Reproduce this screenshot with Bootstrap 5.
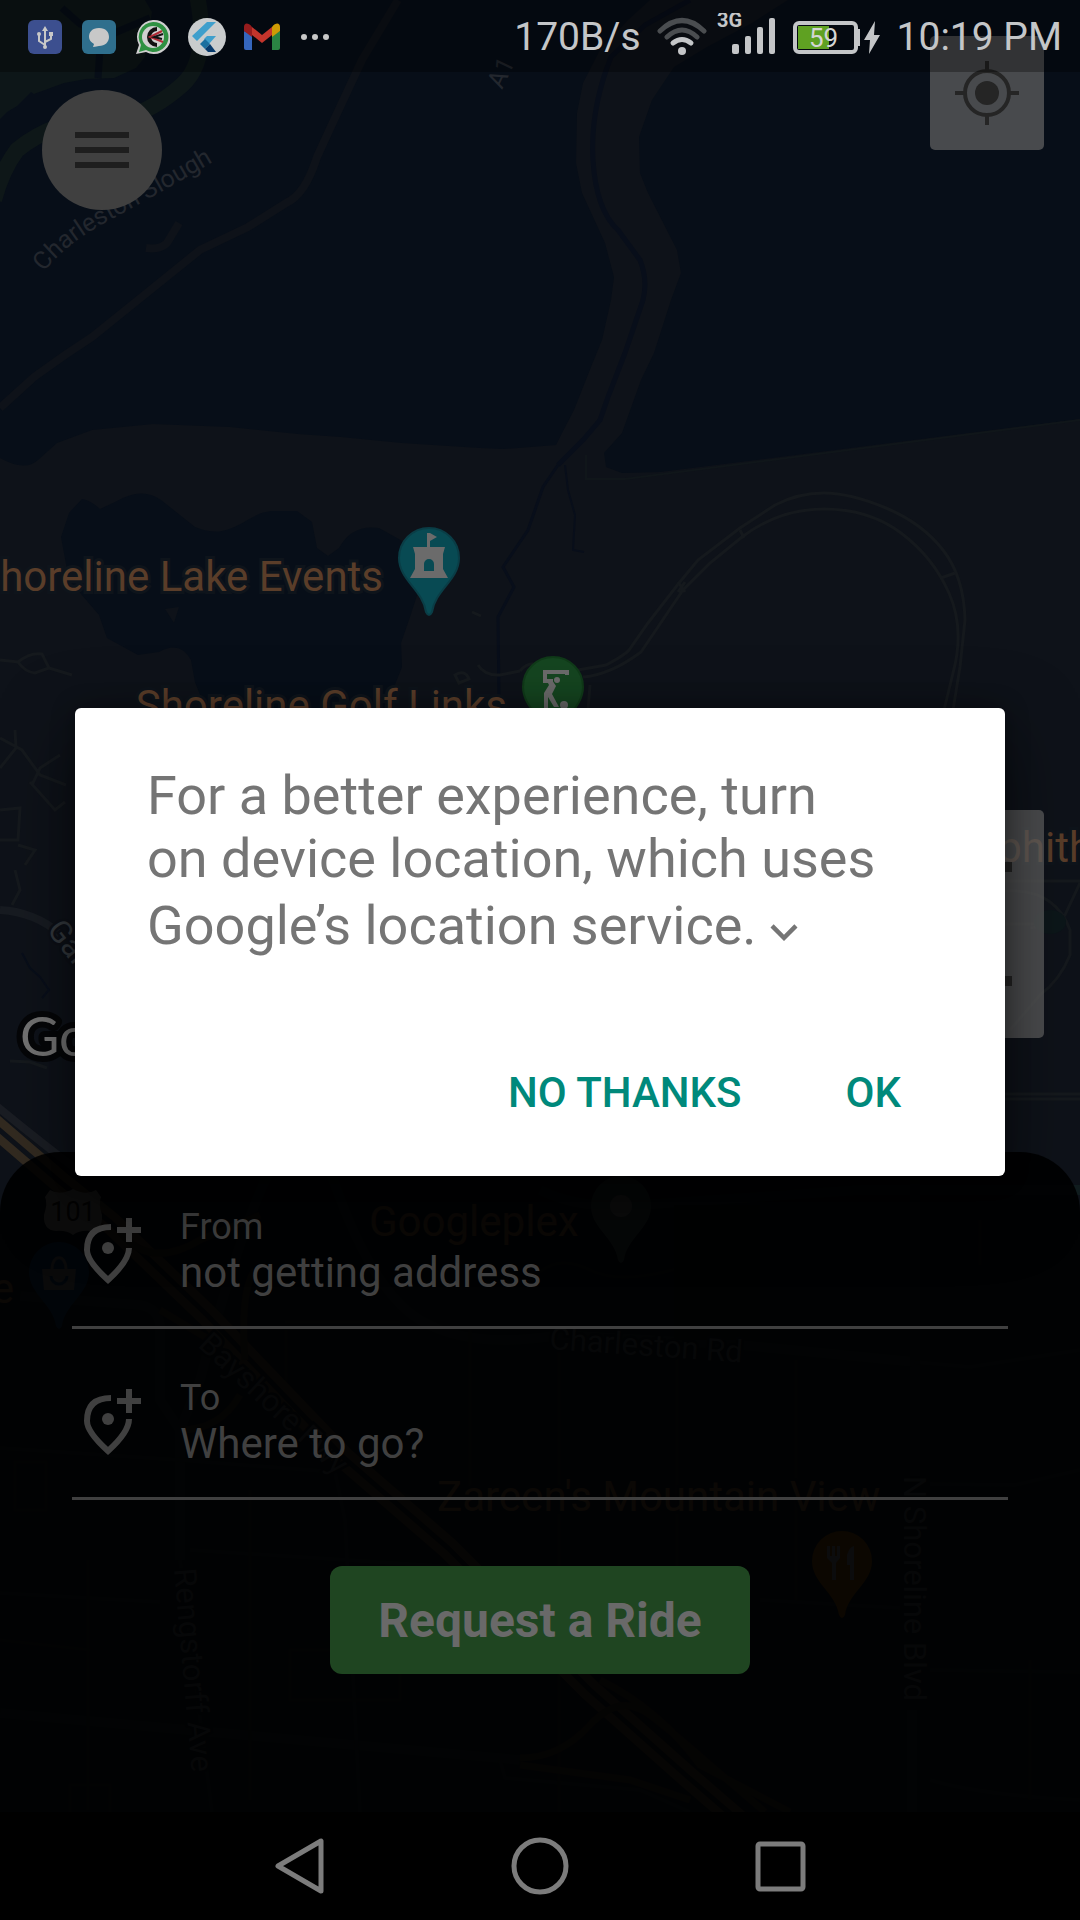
<!DOCTYPE html>
<html lang="en">
<head>
<meta charset="utf-8">
<meta name="viewport" content="width=device-width, initial-scale=1">
<title>Request a Ride</title>
<link rel="stylesheet" href="https://cdn.jsdelivr.net/npm/bootstrap@5.3.0/dist/css/bootstrap.min.css">
<style>
  body { font-family: Roboto, "Noto Sans", sans-serif; background: #000; color: #404040; }
  .phone { background: #0e1219; }
  .map-canvas { position: absolute; inset: 0; width: 100%; height: 100%; }
  .status-strip { height: 72px; background: rgba(0,0,0,.3); color: #c4c6c8; font-size: 39px; line-height: 48px; padding: 2px 18px 0 28px; z-index: 3; }
  .notif { gap: 18px; }
  .plain-btn { background: none; border: 0; padding: 0; color: inherit; }
  .plain-btn svg, .notif svg, .indicators svg, .sheet svg { display: block; }
  .menu-btn { left: 42px; top: 18px; width: 120px; height: 120px; border-radius: 50%; background: #404040; color: #1e1e1e; }
  .map-btn { width: 114px; height: 114px; background: rgba(100,100,100,.7); color: #252525; border-radius: 5px; }
  .locate-btn { right: 36px; top: -36px; }
  .zoom-box { right: 36px; bottom: 114px; }
  .zoom-box .map-btn:first-child { border-radius: 5px 5px 0 0; }
  .zoom-box .map-btn:last-child { border-radius: 0 0 5px 5px; }
  .sheet { background: rgba(0,0,0,.87); border-radius: 60px 60px 0 0; padding: 6px 72px 138px; }
  .place { border-bottom: 3px solid #404040; padding: 48px 0 29px 12px; gap: 36px; }
  .place label { font-size: 36px; line-height: 42px; }
  .place input { background: none; border: 0; outline: 0; padding: 0; color: #404040; font-size: 42px; line-height: 49px; height: 49px; width: 100%; }
  .place input::placeholder { color: #404040; opacity: 1; }
  .ride-btn { margin-top: 66px; width: 420px; height: 108px; border: 0; border-radius: 12px; background: #1f4521; color: #696969; font-size: 48px; font-weight: 700; line-height: 56px; padding: 2px 0 0; }
  .system-nav { background: #000; height: 108px; color: #7c7c7c; gap: 180px; z-index: 3; }
  .prompt-layer { inset: 0; z-index: 2; padding: 0 75px; }
  .prompt { background: #fff; border: 0; border-radius: 6px; box-shadow: 0 24px 72px rgba(0,0,0,.5), 0 0 24px rgba(0,0,0,.3); padding: 56px 80px 35px 72px; }
  .prompt-text { color: #757575; font-size: 54px; line-height: 63px; margin: 0 0 85px; }
  .prompt-text svg { vertical-align: -15px; padding-top: 15px; box-sizing: content-box; display: inline; }
  .prompt-actions { gap: 56px; }
  .prompt-actions button { color: #00897b; font-size: 42px; line-height: 49px; font-weight: 500; padding: 24px; }
  .poi { fill: #5a3d29; font-size: 42px; stroke: #0e141b; stroke-width: 6px; paint-order: stroke; }
  .street { fill: #23272e; font-size: 25px; }
  .avenue { fill: #33383d; font-size: 31px; stroke: #0d1017; stroke-width: 5px; paint-order: stroke; }
</style>
</head>
<body>
<div class="phone position-relative min-vh-100 d-flex flex-column overflow-hidden">

<svg class="map-canvas" viewBox="0 0 1080 1920" preserveAspectRatio="xMidYMin slice" aria-label="Map of Shoreline, Mountain View" role="img">
  <defs>
    <path id="pinShape" d="M0-30A30 30 0 0 1 30 0C30 22 6 32 3 54Q0 60-3 54C-6 32-30 22-30 0A30 30 0 0 1 0-30Z"/>
    <path id="sloughLine" d="M44 272Q65 244 110 220T220 158"/>
  </defs>
  <!-- bay water -->
  <g fill="#070e18">
    <path d="M0 0H650L628 20 600 50 583 83 577 113 576 163 582 193 605 243 614 277 611 300 602 340 591 367 574 410 562 433 556 445 518 448 503 449 480 448 402 443 341 437 298 434 230 427 153 424 92 430 57 443 38 460Q25 472 0 458Z"/>
    <path d="M788 0 752 23 707 47 674 67 652 100 639 137 640 173 648 193 677 250 681 273 671 300 654 353 641 380 622 433 604 453 606 467 622 473 660 472 1080 419V0Z"/>
    <path d="M82 499Q90 500 100 509L115 502Q142 486 161 500L195 527Q210 533 222 531C245 526 255 510 276 511H297L312 522 317 548 328 556 339 548Q352 524 379 528L413 547 421 583 410 617 401 643 402 667 396 682 380 720H210L195 682 191 660Q180 640 159 652L138 655 107 638 99 615 69 580 61 537 69 513Z"/>
  </g>
  <path d="M165 609l14-2-5 16z" fill="#0e1219"/>
  <g fill="none" stroke="#0e1219" stroke-width="8">
    <path d="M398 0 362 60 334 120 317 157Q305 195 286 203L248 227 200 250 138 300 92 337 65 355 34 377 0 408"/>
    <path d="M146 248Q160 250 167 243L179 223"/>
  </g>
  <!-- marsh -->
  <path d="M0 0H145L152 12 145 57 136 68 114 78 86 79 64 83 34 94 31 92 17 106 7 112 0 119Z" fill="#0d1618"/>
  <path d="M62 8 80 24 112 34 150 18M101 34 98 78" fill="none" stroke="#070e18" stroke-width="7"/>
  <path d="M197-5Q210 60 182 85T120 120Q60 115 17 150Q2 170-6 200" fill="none" stroke="#0e1718" stroke-width="16"/>
  <!-- creek -->
  <g fill="none" stroke="#080e1a">
    <path stroke-width="5" d="M690 0 645 25 611 57Q590 110 593 160T618 230L640 260Q648 280 643 300L625 353 608 397 600 420 583 440 558 465"/>
    <path stroke-width="3" d="M558 465 543 487 528 530 503 567 514 587 498 617 499 700"/>
    <path stroke-width="2" d="M565 465 568 490 575 515 573 550 584 552M22 953 30 968 40 977 49 990 42 998"/>
  </g>
  <g fill="none" stroke="#15191d" stroke-width="3">
    <path d="M578 670 606 665Q625 655 629 650L648 623 679 583 698 560 740 528 775 505Q798 493 824 493T886 508 943 550 965 620L960 667 953 710"/>
    <path d="M583 677Q610 675 641 652L683 590 710 563 742 537Q779 509 824 509T901 533 949 593 953 673L944 710M740 530l4 8M941 578l14-5M678 582l7 10M685 582l-7 10"/>
    <path d="M478 665Q485 676 500 675L520 671M520 671q10-12 22-4M472 612l9 4M455 675q10-6 14 4l-10 4z"/>
    <path d="M0 660 18 662Q30 652 42 654L49 668 35 673Q25 672 18 662M49 668 72 675M0 738 22 750 40 775 66 785M15 730 16 748 0 768M32 785 40 768 60 755M30 782 55 810 65 802M0 810 20 808 18 840 0 840M18 845 35 850 25 865M15 870 20 890 12 905"/>
    <path d="M945 892Q945 881 960 881H1080M1005 891Q1055 888 1070 930V955Q1060 980 1040 995L1010 1030M1005 924H1065M1080 883 1065 915Q1055 925 1030 928M1005 1094H1080M1005 1099H1080M10 1061 30 1062 47 1068"/>
    <path d="M590 685 588 710"/>
  </g>
  <ellipse cx="1050" cy="922" rx="16" ry="12" fill="#0c1619"/>
  <path d="M586 455V479H625L1080 420" fill="none" stroke="#10161a" stroke-width="2"/>
  <path d="M0 910Q35 912 60 934" fill="none" stroke="#171b21" stroke-width="8"/>
  <!-- local roads -->
  <g fill="none" stroke="#111d1f">
    <path stroke-width="10" d="M20 1296 140 1305Q158 1308 160 1325V1400L180 1430V1560M270 1170Q240 1230 200 1380L180 1430M330 1170Q370 1290 420 1320T560 1335L740 1345 915 1362M915 1180V1480M540 1190Q580 1210 640 1205L860 1190H1080M0 1713 520 1760M912 1710V1812"/>
    <path stroke-width="4" d="M0 1448 180 1460 335 1472 345 1520 360 1812M915 1362 970 1367 1080 1350M930 1484 1015 1485 1080 1470M0 1593 160 1602M190 1550 470 1568M760 1600 900 1608M180 1560 212 1812M500 1760 505 1778 640 1790 690 1812M930 1670 1080 1672M930 1780Q980 1795 1080 1800"/>
  </g>
  <g fill="none" stroke="#16191d" stroke-width="3">
    <path d="M559 1350V1812M677 1350V1580M796 1360V1600M540 1272Q560 1255 590 1270T680 1268M15 1462V1510H46V1462ZM88 1560V1810M285 1322H400M470 1330V1500M250 1490V1800M980 1220V1265M1030 1660V1800M290 1650H400V1700H290ZM0 1640 90 1650M70 1812V1785H110V1812M286 1330V1400Q300 1460 420 1500"/>
  </g>
  <path d="M674 1205V1340H760V1205Z" fill="#0a1515"/>
  <!-- highway 101 -->
  <g fill="none">
    <path stroke="#1a1d23" stroke-width="8" d="M-6 1104Q40 1142 80 1172"/>
    <path stroke="#322a20" stroke-width="22" d="M-10 1122 60 1182 110 1222 207 1315 344 1458 448 1548 590 1690 689 1778 740 1822"/>
    <path stroke="#0e1219" stroke-width="5" d="M-10 1122 60 1182 110 1222 207 1315 344 1458 448 1548 590 1690 689 1778 740 1822"/>
    <path stroke="#241f1a" stroke-width="7" d="M120 1232Q150 1270 200 1240L260 1215M160 1310 210 1340M245 1360Q240 1290 255 1270M180 1430Q220 1430 240 1395M520 1758Q560 1758 590 1725T650 1715 710 1765L765 1812M600 1680Q660 1710 700 1765L790 1812M520 1765 630 1780 690 1800"/>
  </g>
  <!-- pins -->
  <g transform="translate(429 558)">
    <use href="#pinShape" fill="#084a53" stroke="#0a3d46" stroke-width="2"/>
    <path fill="#6b6b6b" d="M-2-25h3l7 4-7 4v6h15l-2 7v15l5 9H-19l5-9V-4l-2-7H-2zM-5 13h10V6a5 5 0 0 0-10 0z"/>
  </g>
  <g transform="translate(553 687)">
    <use href="#pinShape" fill="#154520" stroke="#103a19" stroke-width="2"/>
    <path fill="none" stroke="#6b6b6b" stroke-width="4" d="M14-12V-15H-8V-6H0"/>
    <circle cx="4" cy="-7" r="3" fill="#6b6b6b"/><circle cx="11" cy="18" r="4" fill="#6b6b6b"/>
    <path fill="#6b6b6b" d="M-7-8-1-7 3-1-1 7 6 20H1L-5 10V22h-4V6l5-8z"/>
  </g>
  <g transform="translate(59 1272)">
    <use href="#pinShape" fill="#0f2a4a"/>
    <path fill="#4c4c50" d="M-17-3h34l-2 21h-30z"/>
    <path fill="none" stroke="#4c4c50" stroke-width="3" d="M-7-3C-7-18 7-18 7-3"/>
    <path fill="none" stroke="#0f2a4a" stroke-width="3" d="M-8 4a8 8 0 0 0 16 0"/>
  </g>
  <g transform="translate(621 1206)"><use href="#pinShape" fill="#2c3a3c"/><circle r="11" fill="#575757"/></g>
  <g transform="translate(842 1561)">
    <use href="#pinShape" fill="#5e3a0a"/>
    <path fill="#5b5b62" d="M-15-15h3V-5h2v-10h3V-5h2v-10h3V-3l-4 5v17h-4V2l-5-5zM12-15V19H8V4H5V-6q2-8 7-9z"/>
  </g>
  <path fill="#606060" d="M50 1190Q60 1196 73 1189Q86 1196 96 1190L101 1197Q98 1203 102 1215Q103 1230 90 1231Q80 1230 73 1235Q66 1230 56 1231Q43 1230 44 1215Q48 1203 45 1197Z"/>
  <text x="73" y="1221" text-anchor="middle" font-size="27" fill="#111">101</text>
  <!-- labels -->
  <text class="poi" x="383" y="591" text-anchor="end">Shoreline Lake Events</text>
  <text class="poi" x="507" y="720" text-anchor="end">Shoreline Golf Links</text>
  <text class="poi" x="934" y="862">Amphitheatre</text>
  <text class="poi" x="369" y="1236">Googleplex</text>
  <text class="poi" x="437" y="1511">Zareen's Mountain View</text>
  <text class="poi" x="14" y="1303" text-anchor="end">Safe</text>
  <text class="street"><textPath href="#sloughLine">Charleston Slough</textPath></text>
  <text class="street" transform="translate(502 90) rotate(-65)">A1</text>
  <text class="avenue" transform="translate(46 930) rotate(52)">Garcia Ave</text>
  <text class="avenue" transform="translate(197 1346) rotate(43)">Bayshore Fwy</text>
  <text class="avenue" transform="translate(549 1349) rotate(4)">Charleston Rd</text>
  <text class="avenue" transform="translate(904 1476) rotate(90)">N Shoreline Blvd</text>
  <text class="avenue" transform="translate(174 1569) rotate(85)">Rengstorff Ave</text>
  <text x="20" y="1056" font-family="Lato, sans-serif" font-size="54" fill="#737373" stroke="#050608" stroke-width="12" stroke-linejoin="round" paint-order="stroke">Google</text>
</svg>

<header class="status-strip position-relative d-flex align-items-center justify-content-between">
  <div class="notif d-flex align-items-center">
    <svg width="36" height="36" viewBox="0 0 36 36"><rect x="0" y="1" width="34" height="34" rx="6" fill="#3c4f8f"/><g fill="none" stroke="#c8c8c8" stroke-width="2"><path d="M17 11V29M17 26l-6-4V16M17 23l6-3V15"/></g><path fill="#c8c8c8" d="M17 7l3 5h-6zM21 13h4v4h-4z"/><circle cx="11" cy="15" r="2" fill="#c8c8c8"/><circle cx="17" cy="28" r="2" fill="#c8c8c8"/></svg>
    <svg width="36" height="36" viewBox="0 0 36 36"><rect x="0" y="1" width="34" height="34" rx="6" fill="#2f6f8d"/><path fill="#c8c8c8" d="M17 9c7 0 10 4 10 9s-4 9-10 9c-2 0-3 1-6 1l1-3c-3-2-5-4-5-7 0-5 3-9 10-9z"/></svg>
    <svg width="34" height="36" viewBox="1 0 34 36"><path fill="#cfcfcf" d="M18 1a17 17 0 1 1-7 32L1 35l3-9A17 17 0 0 1 18 1z"/><path fill="#2f9142" d="M18 3a15 15 0 1 1-7 28l-7 2 2-7A15 15 0 0 1 18 3z"/><circle cx="18" cy="18" r="11" fill="#d0d0d0"/><path fill="none" stroke="#111" stroke-width="4" d="M22 10a8 8 0 1 0 0 16"/><path fill="none" stroke="#b02a35" stroke-width="2" d="M27 12 15 18 28 23"/><path fill="none" stroke="#111" stroke-width="2" d="M28 15 19 18 27 20"/></svg>
    <svg width="38" height="38" viewBox="0 0 38 38"><circle cx="19" cy="19" r="19" fill="#c9cccd"/><path fill="#3f9fcc" d="M19 4h9L9 23l-5-5zM19 18h9l-7 8-5-5z"/><path fill="#1b6f9f" d="M12 26l5-5 5 5-5 5z"/><path fill="#06396b" d="M17 31l5-5 6 8h-8z"/></svg>
    <svg width="36" height="28" viewBox="0 0 36 28"><path fill="#3566bd" d="M0 8v17q0 2 2 2h6V12z"/><path fill="#2a8443" d="M36 8v17q0 2-2 2h-6V12z"/><path fill="#c3352c" d="M8 4l10 8 10-8v8L18 20 8 12z"/><path fill="#961c1d" d="M0 8V4C0 0 4-1 8 4v10z"/><path fill="#cf9b05" d="M36 8V4c0-4-4-5-8 0v10z"/></svg>
    <svg width="36" height="8" viewBox="0 0 36 8"><g fill="#c8c8c8"><circle cx="6" cy="4" r="3"/><circle cx="17" cy="4" r="3"/><circle cx="28" cy="4" r="3"/></g></svg>
  </div>
  <div class="indicators d-flex align-items-center">
    <span>170B/s</span>
    <svg class="ms-3" width="224" height="48" viewBox="658 13 224 48" role="img" aria-label="Wi-Fi, 3G signal, battery 59 percent, charging">
      <g fill="none" stroke-width="5" stroke-linecap="round"><path stroke="#4a4d50" d="M661 31Q683 10 705 31M668 37Q683 23 698 37"/><path stroke="#c4c6c8" d="M674 43Q683 36 692 43"/></g>
      <circle cx="683" cy="51" r="4" fill="#c4c6c8"/>
      <text x="718" y="27" font-size="20" font-weight="700" fill="#c4c6c8">3G</text>
      <g fill="#c4c6c8"><rect x="733" y="44" width="7" height="10" rx="2"/><rect x="746" y="36" width="6" height="18" rx="2"/><rect x="758" y="27" width="6" height="27" rx="2"/><rect x="770" y="18" width="6" height="36" rx="2"/><path d="M858 29h3v17h-3zM876 21 865 40h6l-1 14 11-19h-6z"/></g>
      <rect x="796" y="23" width="61" height="29" rx="4" fill="none" stroke="#c4c6c8" stroke-width="4"/>
      <path fill="#5fa122" d="M799 26h31v23h-31z"/>
      <text x="810" y="47" font-size="26" fill="#d4d6d4">59</text>
    </svg>
    <time class="ms-3">10:19 PM</time>
  </div>
</header>

<main class="position-relative flex-grow-1 d-flex flex-column">
  <div class="position-relative flex-grow-1">
    <button class="plain-btn menu-btn position-absolute d-flex align-items-center justify-content-center" type="button" aria-label="Menu">
      <svg width="54" height="36" viewBox="0 0 54 36" fill="currentColor"><path d="M0 0h54v6H0zM0 15h54v6H0zM0 30h54v6H0z"/></svg>
    </button>
    <button class="plain-btn map-btn locate-btn position-absolute d-flex align-items-center justify-content-center" type="button" aria-label="My location">
      <svg width="64" height="64" viewBox="0 0 64 64"><circle cx="32" cy="32" r="22" fill="none" stroke="currentColor" stroke-width="4"/><circle cx="32" cy="32" r="12" fill="currentColor"/><path fill="currentColor" d="M30 0h4v10h-4zM30 54h4v10h-4zM0 30h10v4H0zM54 30h10v4H54z"/></svg>
    </button>
    <div class="zoom-box position-absolute d-flex flex-column">
      <button class="plain-btn map-btn d-flex align-items-center justify-content-center" type="button" aria-label="Zoom in"><svg width="50" height="50" viewBox="0 0 50 50" fill="currentColor"><path d="M20 0h10v20h20v10H30v20H20V30H0V20h20z"/></svg></button>
      <button class="plain-btn map-btn d-flex align-items-center justify-content-center" type="button" aria-label="Zoom out"><svg width="50" height="10" viewBox="0 0 50 10" fill="currentColor"><path d="M0 0h50v10H0z"/></svg></button>
    </div>
  </div>

  <form class="sheet position-relative d-flex flex-column">
    <div class="place d-flex align-items-center">
      <svg class="flex-shrink-0" width="60" height="68" viewBox="0 0 60 68"><path fill="none" stroke="currentColor" stroke-width="6" d="M27 9Q3 9 3 32Q3 43 24 62Q45 43 45 30"/><circle cx="24" cy="30" r="6" fill="currentColor"/><path fill="currentColor" d="M42 0h6v9h9v6h-9v9h-6v-9h-9V9h9z"/></svg>
      <div class="flex-grow-1 d-flex flex-column"><label for="fromField">From</label><input id="fromField" type="text" value="not getting address"></div>
    </div>
    <div class="place d-flex align-items-center">
      <svg class="flex-shrink-0" width="60" height="68" viewBox="0 0 60 68"><path fill="none" stroke="currentColor" stroke-width="6" d="M27 9Q3 9 3 32Q3 43 24 62Q45 43 45 30"/><circle cx="24" cy="30" r="6" fill="currentColor"/><path fill="currentColor" d="M42 0h6v9h9v6h-9v9h-6v-9h-9V9h9z"/></svg>
      <div class="flex-grow-1 d-flex flex-column"><label for="toField">To</label><input id="toField" type="text" placeholder="Where to go?"></div>
    </div>
    <button class="ride-btn align-self-center" type="button">Request a Ride</button>
  </form>

  <div class="prompt-layer position-absolute d-flex align-items-center">
    <div class="prompt w-100" role="dialog" aria-modal="true" aria-labelledby="promptText">
      <p class="prompt-text" id="promptText">For a better experience, turn<br>on device location, which uses<br>Google’s location service.<svg width="54" height="54" viewBox="0 0 24 24" fill="currentColor" aria-hidden="true"><path d="M7.400 8.600 12 13.200l4.600-4.600L18 10l-6 6-6-6z"/></svg></p>
      <div class="prompt-actions d-flex justify-content-end">
        <button class="plain-btn" type="button">NO THANKS</button>
        <button class="plain-btn" type="button">OK</button>
      </div>
    </div>
  </div>
</main>

<footer class="system-nav position-relative d-flex align-items-center justify-content-center">
  <button class="plain-btn" type="button" aria-label="Back"><svg width="60" height="60" viewBox="0 0 60 60"><path fill="none" stroke="currentColor" stroke-width="5" stroke-linejoin="round" d="M51 5V55L8 30Z"/></svg></button>
  <button class="plain-btn" type="button" aria-label="Home"><svg width="60" height="60" viewBox="0 0 60 60"><circle cx="30" cy="30" r="26" fill="none" stroke="currentColor" stroke-width="5"/></svg></button>
  <button class="plain-btn" type="button" aria-label="Recent apps"><svg width="60" height="60" viewBox="0 0 60 60"><rect x="8" y="8" width="45" height="45" rx="2" fill="none" stroke="currentColor" stroke-width="5"/></svg></button>
</footer>
</div>
<script src="https://cdn.jsdelivr.net/npm/bootstrap@5.3.0/dist/js/bootstrap.bundle.min.js"></script>
</body>
</html>
